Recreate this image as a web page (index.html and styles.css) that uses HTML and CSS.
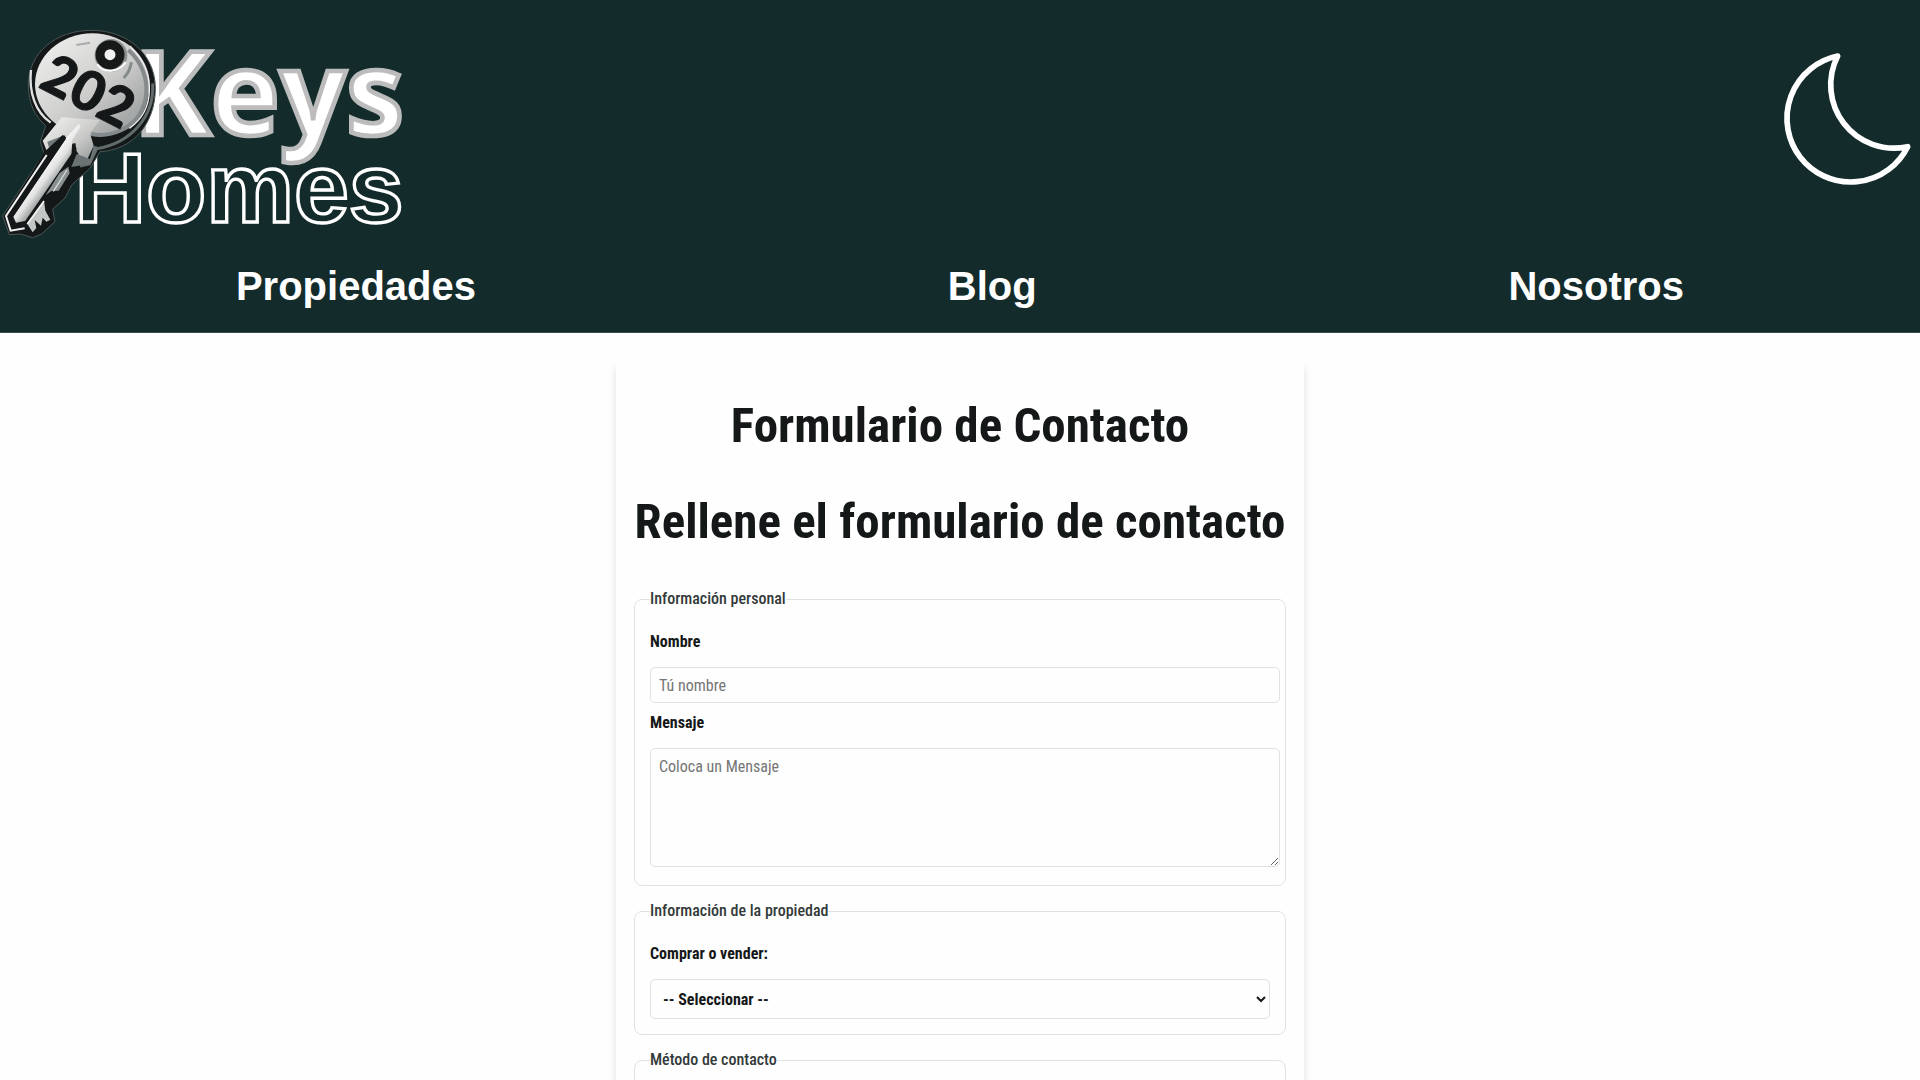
FILE: index.html
```html
<!DOCTYPE html>
<html lang="es">
<head>
<meta charset="utf-8">
<title>Keys Homes - Contacto</title>
<meta name="viewport" content="width=device-width, initial-scale=1">
<link rel="stylesheet" href="styles.css">
</head>
<body>
<header class="header">
  <div class="header-top">
    <a class="logo" href="#" aria-label="Keys Homes">
      <svg class="logo-art" viewBox="0 0 1260 744">
        <defs>
          <linearGradient id="metal" x1="0" y1="0" x2="1" y2="1">
            <stop offset="0" stop-color="#f4f4f3"/>
            <stop offset=".55" stop-color="#cbcbca"/>
            <stop offset="1" stop-color="#8d9292"/>
          </linearGradient>
          <linearGradient id="blade" gradientUnits="userSpaceOnUse" x1="110" y1="510" x2="170" y2="555">
            <stop offset="0" stop-color="#fff"/>
            <stop offset=".5" stop-color="#e2e3e2"/>
            <stop offset="1" stop-color="#7f8686"/>
          </linearGradient>
        </defs>
        <text class="logo-homes" x="224" y="665">Homes</text>
        <text class="logo-keys" x="400" y="405">Keys</text>
        <path d="M275 91C165 91 85 160 85 255C85 310 105 350 137 377L121 425L132 460L8 648L28 704L62 702L98 713L125 702L165 665L158 628L195 594L215 555L270 505L300 455C400 450 466 370 466 265C466 160 380 91 275 91Z" fill="#151818" stroke="#4b5656" stroke-width="3"/>
        <path d="M93 210C86 275 105 335 152 368" fill="none" stroke="#dfe1e0" stroke-width="7"/>
        <path d="M458 250C464 350 392 430 290 446L268 492L240 498" fill="none" stroke="#626b6c" stroke-width="9"/>
        <ellipse cx="277" cy="253" rx="172" ry="153" fill="url(#metal)"/>
        <path d="M385 150C465 220 455 350 365 390C335 404 300 407 274 402" fill="none" stroke="#858b8c" stroke-width="12"/>
        <path d="M390 138C470 215 466 330 388 385" fill="none" stroke="#edeeed" stroke-width="4"/>
        <path d="M185 352L128 422L144 462L192 405L236 462L225 486L262 478L281 437L270 400L300 360Z" fill="url(#metal)"/>
        <path d="M142 425L195 405L150 453Z" fill="#717979"/>
        <path d="M230 462L270 477L281 437L292 440L272 491L214 501Z" fill="#6b7374"/>
        <path d="M132 457L188 405L230 445L205 500L70 686L34 692L16 648Z" fill="#151818"/>
        <path d="M140 465L18 648L32 692L74 685" fill="none" stroke="#f0f1f0" stroke-width="6"/>
        <path d="M236 372L200 412L40 650L48 668L78 662L214 467L217 420L242 380Z" fill="url(#blade)"/>
        <path d="M193 414L34 648" stroke="#151818" stroke-width="10"/>
        <path d="M222 430L225 454L80 665" fill="none" stroke="#151818" stroke-width="9"/>
        <path d="M205 500L178 520L137 586L154 573L176 572L209 520Z" fill="#899092"/>
        <path d="M201 510L160 574" stroke="#d9dcdb" stroke-width="4"/>
        <path d="M132 603L82 672L98 697L109 684L104 660L123 677L128 653L139 665L151 659L136 632Z" fill="#c3c7c6"/>
        <path d="M132 603L82 672" stroke="#f5f5f5" stroke-width="5"/>
        <circle cx="333" cy="166" r="49" fill="#8b9191"/>
        <path d="M292 193C309 220 357 219 377 186" fill="none" stroke="#fff" stroke-width="6"/>
        <circle cx="330" cy="164" r="30" fill="#f1f1f1" stroke="#171919" stroke-width="27"/>
        <path d="M229 135L270 128" stroke="#a7abab" stroke-width="6"/>
        <path d="M394 187Q390 215 371 234" fill="none" stroke="#858b8b" stroke-width="9"/>
        <g transform="translate(112 260) rotate(27)">
          <text class="logo-number" x="0" y="0">202</text>
        </g>
      </svg>
    </a>
    <button class="theme" type="button" aria-label="Modo oscuro">
      <svg class="theme-icon" viewBox="0 0 540 570"><path d="M293 108A190 190 0 0 0 503 380A191 191 0 1 1 293 108Z"/></svg>
    </button>
  </div>
  <nav class="nav">
    <a href="#">Propiedades</a>
    <a href="#">Blog</a>
    <a href="#">Nosotros</a>
  </nav>
</header>
<main class="contact">
  <h1 class="title">Formulario de Contacto</h1>
  <h2 class="title">Rellene el formulario de contacto</h2>
  <form class="form">
    <fieldset>
      <legend>Información personal</legend>
      <label for="nombre">Nombre</label>
      <input class="field" type="text" id="nombre" placeholder="Tú nombre">
      <label for="mensaje">Mensaje</label>
      <textarea class="field message" id="mensaje" placeholder="Coloca un Mensaje"></textarea>
    </fieldset>
    <fieldset>
      <legend>Información de la propiedad</legend>
      <label for="opciones">Comprar o vender:</label>
      <select class="select" id="opciones">
        <option>-- Seleccionar --</option>
      </select>
    </fieldset>
    <fieldset>
      <legend>Método de contacto</legend>
      <label for="metodo">Teléfono</label>
      <input type="radio" id="metodo" name="metodo">
    </fieldset>
  </form>
</main>
</body>
</html>
```
FILE: styles.css
```css
* { box-sizing: border-box; }

body {
  margin: 0;
  background: #fefefe;
  color: #151818;
  font-family: "Roboto Condensed", "Liberation Sans Narrow", "Liberation Sans", sans-serif;
  font-size: 16px;
}

.header {
  background: #142b2b;
  border-bottom: 1px solid #3d4b4b;
}
.header-top {
  display: flex;
  justify-content: space-between;
  align-items: flex-start;
}
.logo, .logo-art { display: block; }
.logo-art { width: 420px; height: 248px; }
.logo-keys {
  font: bold 350px "Open Sans", sans-serif;
  fill: #fff;
  stroke: #bcbcbc;
  stroke-width: 14px;
}
.logo-homes {
  font: bold 296px "Liberation Sans", sans-serif;
  fill: #142b2b;
  stroke: #fff;
  stroke-width: 10px;
}
.logo-number {
  font: 900 164px Lato, sans-serif;
  fill: #151818;
  stroke: #151818;
  stroke-width: 3px;
}
.theme {
  margin: 20px 0 0;
  padding: 0;
  border: 0;
  background: none;
}
.theme-icon {
  display: block;
  width: 180px;
  height: 190px;
  fill: none;
  stroke: #fff;
  stroke-width: 17px;
  stroke-linejoin: round;
}

.nav {
  display: flex;
  justify-content: space-around;
  padding: 14px 0 22px;
}
.nav a {
  color: #fff;
  font: bold 40px/48px "Liberation Sans", Arial, sans-serif;
  text-decoration: none;
}

.contact {
  width: 688px;
  max-width: 100%;
  margin: 24px auto;
  padding: 16px;
  border-radius: 8px;
  box-shadow: 0 8px 8px rgba(0, 0, 0, .12);
}
.title {
  margin: 24px 0 38px;
  font-size: 49px;
  line-height: 58px;
  text-align: center;
  white-space: nowrap;
}

fieldset {
  margin: 0 2px 15px;
  padding: 8px 15px 15px;
  border: 1px solid #e1e1e1;
  border-radius: 8px;
}
legend {
  padding: 0;
  color: #333a3a;
  font-weight: 500;
  line-height: 20px;
}
label {
  display: block;
  margin: 15px 0;
  font-weight: bold;
  line-height: 20px;
}
.field, .select {
  display: block;
  border: 1px solid #e1e1e1;
  border-radius: 5px;
  background: #fefefe;
  font-family: inherit;
  font-size: 16px;
}
.field {
  width: calc(100% + 10px);
  height: 36px;
  padding: 8px;
}
.field + label { margin-top: 10px; }
.field::placeholder { color: #757575; }
.message {
  height: 119px;
  margin-bottom: 3px;
}
.select {
  width: 100%;
  height: 40px;
  padding: 8px;
  color: #151818;
  font-weight: bold;
}
```
